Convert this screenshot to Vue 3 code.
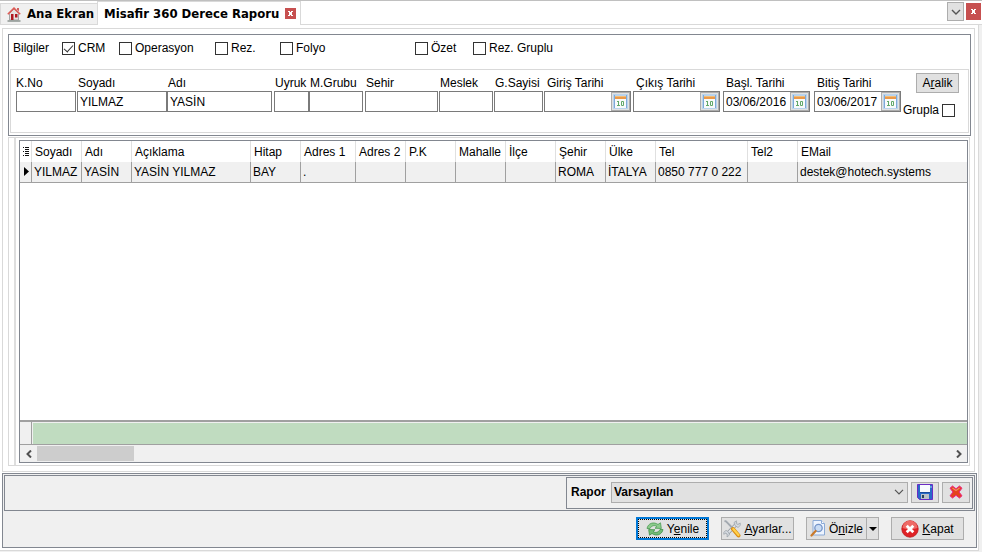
<script setup>
import { ref } from 'vue'

const options = ref([
  { id: 'crm', label: 'CRM', on: true },
  { id: 'operasyon', label: 'Operasyon', on: false },
  { id: 'rez', label: 'Rez.', on: false },
  { id: 'folyo', label: 'Folyo', on: false },
  { id: 'ozet', label: 'Özet', on: false },
  { id: 'rezgruplu', label: 'Rez. Gruplu', on: false },
])

const fields = ref([
  { id: 'kno', label: 'K.No', value: '', width: 60 },
  { id: 'soyadi', label: 'Soyadı', value: 'YILMAZ', width: 90 },
  { id: 'adi', label: 'Adı', value: 'YASİN', width: 105 },
  { id: 'uyruk', label: 'Uyruk', value: '', width: 35 },
  { id: 'mgrubu', label: 'M.Grubu', value: '', width: 54 },
  { id: 'sehir', label: 'Sehir', value: '', width: 73 },
  { id: 'meslek', label: 'Meslek', value: '', width: 54 },
  { id: 'gsayisi', label: 'G.Sayisi', value: '', width: 49 },
  { id: 'giris', label: 'Giriş Tarihi', value: '', width: 87, date: true },
  { id: 'cikis', label: 'Çıkış Tarihi', value: '', width: 87, date: true },
  { id: 'basl', label: 'Başl. Tarihi', value: '03/06/2016', width: 87, date: true },
  { id: 'bitis', label: 'Bitiş Tarihi', value: '03/06/2017', width: 87, date: true },
])

const grouped = ref(false)

const columns = [
  { title: 'Soyadı', width: 50 },
  { title: 'Adı', width: 50 },
  { title: 'Açıklama', width: 119 },
  { title: 'Hitap', width: 50 },
  { title: 'Adres 1', width: 55 },
  { title: 'Adres 2', width: 50 },
  { title: 'P.K', width: 50 },
  { title: 'Mahalle', width: 50 },
  { title: 'İlçe', width: 50 },
  { title: 'Şehir', width: 50 },
  { title: 'Ülke', width: 50 },
  { title: 'Tel', width: 92 },
  { title: 'Tel2', width: 50 },
  { title: 'EMail' },
]

const rows = [
  ['YILMAZ', 'YASİN', 'YASİN YILMAZ', 'BAY', '.', '', '', '', '', 'ROMA', 'İTALYA', '0850 777 0 222', '', 'destek@hotech.systems'],
]
</script>

<template>
  <div class="app">
    <header class="tabs">
      <a href="#" class="tab">
        <svg viewBox="0 0 14 15" width="14" height="15">
          <path d="M2.5 6.5V13h9V6.5L7 2z" fill="#e6e2e0" stroke="#a4a4a4" />
          <path d="M0.8 7.2L7 1.2l6.2 6" fill="none" stroke="#de5a54" stroke-width="1.6" />
          <path d="M10 1h2v3.500l-2-2z" fill="#d06060" />
          <path d="M4 7h2.500v6H4zM8 7h2.500v3.500H8z" fill="#b01820" />
          <path d="M0.500 14h13" stroke="#8c9490" stroke-width="1.500" />
        </svg>
        <span>Ana Ekran</span>
      </a>
      <div class="tab active">
        <a href="#">Misafir 360 Derece Raporu</a>
        <button class="close small" aria-label="Sekmeyi kapat">
          <svg viewBox="0 0 11 11" width="11" height="11"><path d="M3 3h2v1h1V3h2v1H7v3h1v1H6V7H5v1H3V7h1V4H3z" fill="#fff" /></svg>
        </button>
      </div>
      <div class="strip">
        <button class="drop" aria-label="Sekmeler">
          <svg viewBox="0 0 10 6" width="10" height="6"><path d="M1 1l4 4 4-4" fill="none" stroke="#555" stroke-width="1.400" /></svg>
        </button>
        <button class="close" aria-label="Kapat">
          <svg viewBox="0 0 15 17" width="15" height="17"><path d="M5 6h2v1h1V6h2v1H9v3h1v1H8v-1H7v1H5v-1h1V7H5z" fill="#fff" /></svg>
        </button>
      </div>
    </header>

    <main class="shell">
      <div class="page">
        <section class="filters">
          <div class="options">
            <span>Bilgiler</span>
            <label v-for="o in options" :key="o.id" class="check">
              <input v-model="o.on" type="checkbox" /><span>{{ o.label }}</span>
            </label>
          </div>
          <div class="criteria">
            <div v-for="f in fields" :key="f.id" class="field" :class="{ dated: f.date }">
              <label :for="f.id">{{ f.label }}</label>
              <div class="box" :style="{ width: f.width + 'px' }">
                <input :id="f.id" v-model="f.value" type="text" />
                <button v-if="f.date" class="cal" :aria-label="f.label">
                  <svg viewBox="0 0 15 15" width="15" height="15">
                    <rect width="15" height="15" fill="#b9d3ec" />
                    <rect x="2" y="2" width="11" height="12" fill="#f8fafb" />
                    <rect x="2" y="2" width="11" height="3" fill="#eb9a4b" />
                    <path d="M2 2.500h11" stroke="#f3bd77" />
                    <path d="M4 7.500h2M5.500 7v4M4 11.500h3M8.500 7.500h2v4h-2z" fill="none" stroke="#62a868" />
                    <path d="M1.500 1v13M13.500 1v13" stroke="#7fa9d8" />
                  </svg>
                </button>
              </div>
            </div>
            <div class="side">
              <button class="btn range"><span>A<u>r</u>alik</span></button>
              <label class="check grp"><span>Grupla</span><input v-model="grouped" type="checkbox" /></label>
            </div>
          </div>
        </section>

        <section class="results">
          <div class="inner">
            <div class="grid">
              <div class="rows">
                <table>
                  <colgroup>
                    <col class="mark" />
                    <col v-for="c in columns" :key="c.title" :style="c.width ? { width: c.width + 'px' } : null" />
                  </colgroup>
                  <thead>
                    <tr>
                      <th class="ind">
                        <svg viewBox="0 0 8 9" width="8" height="9"><path d="M3 .5h4M3 2.500h4M3 4.500h4M3 6.500h4M3 8.500h4M1 .5h1M1 4.500h1M1 8.500h1" stroke="#111" /></svg>
                      </th>
                      <th v-for="c in columns" :key="c.title">{{ c.title }}</th>
                    </tr>
                  </thead>
                  <tbody>
                    <tr v-for="(r, i) in rows" :key="i">
                      <td class="ind"><svg viewBox="0 0 8 9" width="8" height="9"><path d="M2 0v9l5-4.500z" fill="#000" /></svg></td>
                      <td v-for="(v, j) in r" :key="j">{{ v }}</td>
                    </tr>
                  </tbody>
                </table>
              </div>
              <div class="summary"><span class="cell"></span><span class="green"></span></div>
              <div class="scroll">
                <button aria-label="Sola kaydır"><svg viewBox="0 0 6 8" width="6" height="8"><path d="M5 .5L1.500 4 5 7.500" fill="none" stroke="#505050" stroke-width="2" /></svg></button>
                <div class="track"><div class="thumb"></div></div>
                <button aria-label="Sağa kaydır"><svg viewBox="0 0 6 8" width="6" height="8"><path d="M1 .5L4.500 4 1 7.500" fill="none" stroke="#505050" stroke-width="2" /></svg></button>
              </div>
            </div>
          </div>
        </section>
      </div>

      <footer class="bottom">
        <div class="bar">
          <div class="report">
            <label for="rapor">Rapor</label>
            <div class="pick">
              <select id="rapor"><option>Varsayılan</option></select>
              <svg viewBox="0 0 10 6" width="10" height="6"><path d="M1 .8l4 4 4-4" fill="none" stroke="#555" stroke-width="1.200" /></svg>
            </div>
            <button class="btn icon" aria-label="Kaydet">
              <svg viewBox="0 0 16 16" width="16" height="16">
                <path d="M0.500 .5h15v15h-13l-2-2z" fill="#2869c8" stroke="#6b2bc4" />
                <rect x="3" y="1" width="10" height="7" fill="#f7faff" />
                <path d="M3 8.500h10" stroke="#174b9c" />
                <rect x="4" y="10" width="8" height="5" fill="#b9c0c7" />
                <rect x="5" y="11" width="2" height="3" fill="#29435e" />
                <path d="M14 2v2" stroke="#a5d0f5" />
              </svg>
            </button>
            <button class="btn icon" aria-label="Sil">
              <svg viewBox="0 0 14 14" width="14" height="14">
                <path d="M3.500 1L7 3.800 10.500 1 13 3.200 10 7l3 3.800L10.500 13 7 10.300 3.500 13 1 10.800 4 7 1 3.200z" fill="#e4431c" stroke="#ee2088" stroke-linejoin="round" />
                <path d="M3.500 3L7 5.500 10.500 3" fill="none" stroke="#f08a5c" stroke-width="1.200" />
              </svg>
            </button>
          </div>
        </div>
        <div class="actions">
          <button class="btn act primary">
            <svg viewBox="0 0 18 16" width="18" height="16">
              <path d="M1 7.500C2 2 8 .5 12 3.500L14.500 1.800l.8 5.700-6.300-.3 2-1.700C8.500 3.800 5.500 4.500 4 7.500z" fill="#8ccb8c" stroke="#4b9a54" stroke-width=".8" />
              <path d="M17 8.500c-1 5.500-7 7-11 4l-2.500 1.700-.8-5.700 6.300 .3-2 1.700c2.500 1.700 5.500 1 7-2z" fill="#72bb74" stroke="#3f8f48" stroke-width=".8" />
            </svg>
            <span>Y<u>e</u>nile</span>
          </button>
          <button class="btn act">
            <svg viewBox="0 0 18 18" width="18" height="18">
              <path d="M14.500 3L3.500 14.500" stroke="#8f969e" stroke-width="3.400" />
              <path d="M14.500 3L3.500 14.500" stroke="#dfe3e8" stroke-width="2" />
              <path d="M12 5.500l-1-3L13.500 .8l-.3 2.700 1.800 1 2.200-1.500v2.500L15 7.500z" fill="#d5dae0" stroke="#9aa0a7" stroke-width=".7" />
              <path d="M5.500 12l1 3-2.500 2 .3-2.800-1.500-1.200-2 1.300v-2l2.200-2z" fill="#d5dae0" stroke="#9aa0a7" stroke-width=".7" />
              <path d="M1.500 1l1.500 .3L10 8.500" fill="none" stroke="#a3a9b0" stroke-width="1.800" />
              <path d="M10 9l5.500 6.500" stroke="#db8d12" stroke-width="4" stroke-linecap="round" />
              <path d="M10.300 9l5.200 6" stroke="#ffd04a" stroke-width="2.200" stroke-linecap="round" />
            </svg>
            <span><u>A</u>yarlar...</span>
          </button>
          <div class="split">
            <button class="btn act">
              <svg viewBox="0 0 16 17" width="16" height="17">
                <path d="M3 .5h8.500l3 3V15H3z" fill="#edf4ff" stroke="#8baad6" />
                <path d="M11.500 .5v3h3" fill="#fff" stroke="#8baad6" />
                <circle cx="8.500" cy="8" r="3.700" fill="#c9dcf4" stroke="#7595c9" stroke-width="1.300" />
                <path d="M5.600 11L1.500 15.500" stroke="#c97a2c" stroke-width="2.200" stroke-linecap="round" />
              </svg>
              <span>Ö<u>n</u>izle</span>
            </button>
            <button class="btn more" aria-label="Önizle seçenekleri"><svg viewBox="0 0 8 4" width="8" height="4"><path d="M0 0h8L4 4z" /></svg></button>
          </div>
          <button class="btn act">
            <svg viewBox="0 0 18 18" width="18" height="18">
              <circle cx="9" cy="9" r="8.200" fill="#df2226" stroke="#bd1519" stroke-width=".8" />
              <path d="M1.500 8a7.500 7.500 0 0 1 15 0Q9 10.500 1.500 8z" fill="#ee6a66" />
              <path d="M5.700 5.700l6.600 6.600M12.300 5.700l-6.600 6.600" stroke="#fff" stroke-width="2.800" />
            </svg>
            <span><u>K</u>apat</span>
          </button>
        </div>
      </footer>
    </main>
  </div>
</template>

<style>
body { background: #f0f0f0; }
</style>

<style scoped>
* { box-sizing: border-box; }
.app {
  display: flex;
  flex-direction: column;
  min-height: 100vh;
  padding-bottom: 1px;
  font: 12px/14px "Liberation Sans", Arial, sans-serif;
  color: #000;
}
a { color: inherit; text-decoration: none; }
button, input, select { font: inherit; color: inherit; margin: 0; padding: 0; border-radius: 0; }
button { display: flex; align-items: center; justify-content: center; }
svg { display: block; flex: none; }

.tabs {
  display: flex;
  align-items: stretch;
  height: 25px;
  border-top: 1px solid #c0c0c0;
  background: #fff;
  font: bold 13px/16px "DejaVu Sans Condensed", "DejaVu Sans", sans-serif;
}
.tab {
  display: flex;
  align-items: center;
  gap: 6px;
  margin-top: 2px;
  padding: 0 3px 0 6px;
  border: 1px solid #d9d9d9;
  border-right: 0;
  background: #f0f0f0;
}
.tab.active {
  margin-top: 0;
  padding: 0 4px 0 6px;
  border-right: 1px solid #d9d9d9;
  border-bottom: 0;
  background: #fff;
}
.close { width: 15px; height: 17px; border: 0; background: #c75050; }
.close.small { width: 11px; height: 11px; }
.strip {
  display: flex;
  flex: 1;
  justify-content: flex-end;
  gap: 2px;
  padding: 1px 1px 0 0;
  border-bottom: 1px solid #d9d9d9;
}
.strip .close { margin-top: 1px; }
.drop { width: 17px; height: 19px; border: 1px solid #adadad; background: #e1e1e1; }

.shell {
  display: flex;
  flex: 1;
  flex-direction: column;
  gap: 1px;
  margin-right: 3px;
  padding: 3px 0 2px 2px;
  border: solid #d9d9d9;
  border-width: 0 1px 1px 0;
  background: #fff;
}
.page {
  display: flex;
  flex: 1;
  flex-direction: column;
  gap: 1px;
  margin-right: 3px;
  padding: 5px 3px 5px 5px;
  border: 1px solid #d9d9d9;
  background: #fff;
}
.filters { padding: 0 1px 2px; border: 1px solid #828790; }
.options {
  display: grid;
  grid-template-columns: 49px 57px 96px 65px 135px 58px auto;
  align-items: center;
  height: 34px;
  padding: 0 3px 8px;
  white-space: nowrap;
}
.check { display: flex; align-items: center; gap: 3px; }
.check input {
  appearance: none;
  display: flex;
  flex: none;
  justify-content: center;
  width: 13px;
  height: 13px;
  border: 1px solid #333;
  background: #fff;
}
.check input:checked::before {
  content: "";
  width: 4px;
  height: 8px;
  border: solid #333;
  border-width: 0 1px 1px 0;
  transform: rotate(42deg);
}
.criteria {
  display: grid;
  grid-template-columns: 61px 90px 107px 35px 56px 74px 55px 50px 89px 90px 91px 89px minmax(56px, 1fr);
  min-height: 64px;
  padding: 3px 10px 9px 5px;
  border: 1px solid #d9d9d9;
}
.field { padding-top: 3px; }
.field label { display: block; height: 15px; padding-left: 1px; white-space: nowrap; }
.field:first-child label { padding-left: 0; }
.dated label { padding-left: 3px; }
.box { display: flex; height: 21px; border: 1px solid #7a7a7a; background: #fff; }
.box input { flex: 1; min-width: 0; padding: 0 2px; border: 0; outline: 0; background: none; }
.box .cal { width: 19px; height: 19px; border: 1px solid #adadad; background: #e1e1e1; }
.btn { border: 1px solid #adadad; background: #e1e1e1; }
.side { display: flex; flex-direction: column; align-items: flex-start; gap: 10px; }
.range { align-self: flex-end; width: 43px; height: 20px; }
.grp { height: 14px; }

.results {
  display: flex;
  flex: 1;
  margin-right: 1px;
  padding-left: 5px;
  border: 1px solid #d9d9d9;
}
.inner {
  display: flex;
  flex: 1;
  min-width: 0;
  padding: 2px 1px 2px 3px;
  border-left: 2px solid #dedede;
}
.grid { display: flex; flex: 1; flex-direction: column; min-width: 0; border: 1px solid #828790; }
.rows { flex: 1; overflow: hidden; }
table { width: 100%; table-layout: fixed; border-collapse: separate; border-spacing: 0; }
.mark { width: 12px; }
th, td { height: 21px; padding: 0 0 0 3px; text-align: left; font-weight: normal; white-space: nowrap; }
td { padding-left: 2px; padding-bottom: 1px; border: solid #a0a0a0; border-width: 0 1px 1px 0; background: #f0f0f0; }
th { border-right: 1px solid #e0e0e0; }
th:last-child, td:last-child { border-right: 0; }
.ind { padding-left: 2px; }
.summary { display: flex; gap: 1px; height: 25px; border-top: 2px solid #a0a0a0; border-bottom: 1px solid #a0a0a0; background: #f0f0f0; }
.cell { width: 12px; border-right: 1px solid #a0a0a0; }
.green { flex: 1; margin-top: 1px; background: #c0dcc0; }
.scroll { display: flex; height: 17px; background: #f0f0f0; }
.scroll button { width: 17px; border: 0; background: none; }
.track { flex: 1; padding: 1px 0; }
.thumb { width: 97px; height: 15px; background: #cdcdcd; }

.bottom {
  margin-right: 1px;
  padding: 1px;
  border: 1px solid #828790;
  background: #f0f0f0;
}
.bar { display: flex; justify-content: flex-end; padding: 1px; border: 1px solid #828790; }
.report {
  display: flex;
  align-items: center;
  gap: 3px;
  width: 407px;
  height: 32px;
  padding: 0 2px 2px 4px;
  border: 1px solid #828790;
}
.report label { width: 37px; font-weight: bold; }
.pick { display: grid; flex: 1; align-items: center; height: 21px; border: 1px solid #adadad; background: #e1e1e1; }
.pick select {
  grid-area: 1 / 1;
  appearance: none;
  width: 100%;
  padding: 0 20px 0 2px;
  border: 0;
  outline: 0;
  background: none;
  font-weight: bold;
}
.pick svg { grid-area: 1 / 1; justify-self: end; margin-right: 3px; pointer-events: none; }
.icon { width: 28px; height: 21px; }
.actions { display: flex; justify-content: flex-end; gap: 12px; padding: 6px 11px 6px; }
.act { gap: 3px; width: 73px; height: 23px; white-space: nowrap; }
.primary { outline: 1px dotted #000; outline-offset: -3px; border: 2px solid #0078d7; }
.split { display: flex; }
.split .act { width: 61px; }
.more { width: 12px; border-left: 0; }
</style>
